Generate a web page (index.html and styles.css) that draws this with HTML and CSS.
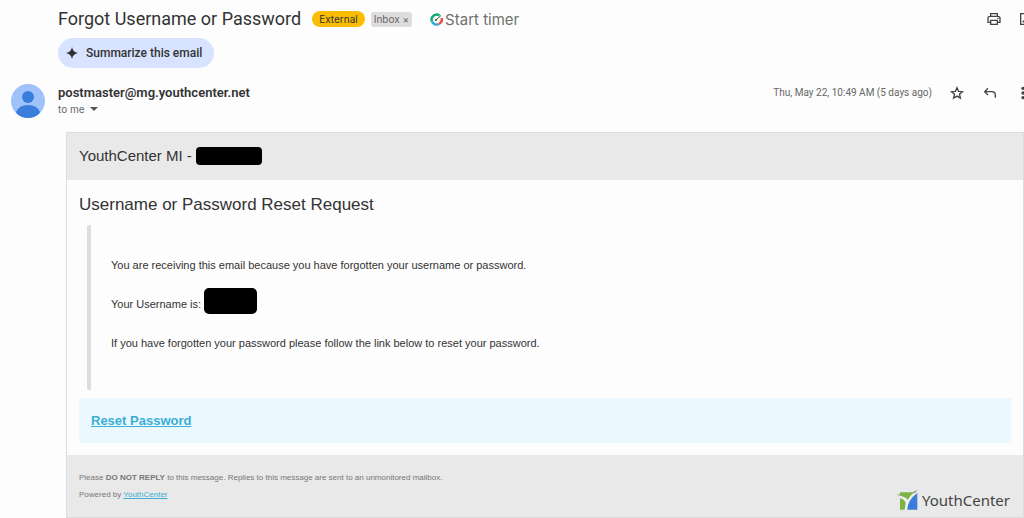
FILE: index.html
```html
<!DOCTYPE html>
<html lang="en">
    <head>
        <meta charset="utf-8">
        <title>Forgot Username or Password</title>
        <link rel="stylesheet" href="styles.css">
    </head>
    <body>
        <header class="subject">
            <h1>Forgot Username or Password</h1>
            <span class="tag external">External</span>
            <span class="tag inbox">Inbox <button type="button" aria-label="Remove label">×</button></span>
            <button type="button" class="timer">
                <svg width="13" height="13" viewBox="0 0 26 26" fill="none" stroke-width="5">
                    <path d="M4 17A10 10 0 0 1 19 5" stroke="#12ad72"/>
                    <path d="M4 17A10 10 0 0 0 18 22" stroke="#31a8db"/>
                    <path d="M18 22A10 10 0 0 0 23 10" stroke="#ef5148"/>
                    <path d="M12 14L22 5" stroke="#444" stroke-width="2"/>
                    <circle cx="12" cy="14" r="2" fill="#444"/>
                </svg>
                Start timer
            </button>
            <div class="tools">
                <button type="button" aria-label="Print">
                    <svg width="16" height="16" viewBox="0 0 24 24" fill="none" stroke="#444" stroke-width="2">
                        <path d="M7 8V4h10v4M7 17H3v-6q0-3 3-3h12q3 0 3 3v6h-4M7 14h10v6H7z"/>
                        <path d="M17 11h2"/>
                    </svg>
                </button>
                <button type="button" aria-label="Open in new window">
                    <svg width="16" height="16" viewBox="0 0 24 24" fill="none" stroke="#444" stroke-width="2">
                        <path d="M12 4H4v16h16v-8M15 4h5v5M20 4L7 17"/>
                    </svg>
                </button>
            </div>
        </header>

        <button type="button" class="summarize">
            <svg width="12" height="12" viewBox="0 0 24 24" fill="#303030">
                <path d="M12 0Q13.500 10.500 24 12Q13.500 13.500 12 24Q10.500 13.500 0 12Q10.500 10.500 12 0z"/>
                <circle cx="12" cy="12" r="5"/>
            </svg>
            Summarize this email
        </button>

        <section class="sender">
            <svg class="avatar" width="34" height="34" viewBox="0 0 34 34">
                <clipPath id="disc"><circle cx="17" cy="17" r="17"/></clipPath>
                <g clip-path="url(#disc)" fill="#3b7ddd">
                    <rect width="34" height="34" fill="#a0c2fb"/>
                    <circle cx="17" cy="13" r="6"/>
                    <path d="M5 28Q8 21 17 21T29 28L27 34H7z"/>
                </g>
            </svg>
            <div class="from">
                <h2>postmaster@mg.youthcenter.net</h2>
                <button type="button" class="to">to me <span class="caret"></span></button>
            </div>
            <time>Thu, May 22, 10:49 AM (5 days ago)</time>
            <div class="tools">
                <button type="button" aria-label="Star">
                    <svg width="16" height="16" viewBox="0 0 24 24" fill="none" stroke="#444" stroke-width="2">
                        <path d="M12 4l2.300 5.500 5.900.5-4.500 3.900 1.400 5.800-5.100-3.100-5.100 3.100 1.400-5.800-4.500-3.900 5.900-.5z"/>
                    </svg>
                </button>
                <button type="button" aria-label="Reply">
                    <svg width="16" height="16" viewBox="0 0 24 24" fill="none" stroke="#444" stroke-width="2">
                        <path d="M9 5L4 10l5 5M4 10h11q5 0 5 5v4"/>
                    </svg>
                </button>
                <button type="button" aria-label="More">
                    <svg width="16" height="16" viewBox="0 0 24 24" fill="#444">
                        <circle cx="12" cy="5" r="2.500"/><circle cx="12" cy="12" r="2.500"/><circle cx="12" cy="19" r="2.500"/>
                    </svg>
                </button>
            </div>
        </section>

        <main class="message">
            <div class="message-header">YouthCenter MI - <span class="redacted"></span></div>
            <div class="message-body">
                <h3>Username or Password Reset Request</h3>
                <blockquote>
                    <p>You are receiving this email because you have forgotten your username or password.</p>
                    <p class="username">Your Username is: <span class="redacted tall"></span></p>
                    <p>If you have forgotten your password please follow the link below to reset your password.</p>
                </blockquote>
                <div class="callout"><a href="#">Reset Password</a></div>
            </div>
            <footer>
                <div>
                    <p>Please <b>DO NOT REPLY</b> to this message. Replies to this message are sent to an unmonitored mailbox.</p>
                    <p>Powered by <a href="#">YouthCenter</a></p>
                </div>
                <div class="logo">
                    <svg width="22" height="22" viewBox="0 0 66 66">
                        <path d="M12 10H56L36 33Q28 21 3 17L12 16z" fill="#7cb342"/>
                        <path d="M12 28Q24 31 30 40L26 62H12z" fill="#7cb342"/>
                        <path d="M64 12V62H34Q34 34 64 12z" fill="#3b7ddd"/>
                        <path d="M1 17Q26 20 34 36Q44 15 65 3Q36 27 31 62H26Q31 48 29 39Q22 24 1 17z" fill="#f4f4f4"/>
                        <path d="M1 17Q20 17 30 27Q18 20 1 17zM50 10L65 3L56 12z" fill="#7c8c6c"/>
                    </svg>
                    YouthCenter
                </div>
            </footer>
        </main>
    </body>
</html>
```
FILE: styles.css
```css
* {
    box-sizing: border-box;
}

body {
    margin: 0;
    padding-top: 7px;
    background-color: #fdfdfd;
    color: #333;
    font-family: Inter, "Liberation Sans", sans-serif;
    overflow: hidden;
}

h1, h2, h3, p, blockquote {
    margin: 0;
    font-weight: normal;
}

button {
    padding: 0;
    border: 0;
    background: none;
    color: inherit;
    font: inherit;
    cursor: pointer;
}

svg {
    display: block;
    flex-shrink: 0;
}

/* subject line */
.subject {
    display: flex;
    align-items: center;
    height: 24px;
    padding-left: 58px;
    white-space: nowrap;
}

h1 {
    font-family: Roboto, sans-serif;
    font-size: 18px;
    line-height: 24px;
}

.tag {
    font-size: 10px;
    line-height: 16px;
}

.external {
    margin-left: 11px;
    padding: 0 7px;
    border-radius: 8px;
    background-color: #fbbc04;
}

.inbox {
    margin-left: 6px;
    padding: 0 3px;
    border-radius: 3px;
    background-color: #ddd;
    color: #666;
    line-height: 15px;
}

.timer {
    display: flex;
    align-items: center;
    gap: 2px;
    margin-left: 18px;
    color: #707070;
    font-size: 15px;
}

.tools {
    display: flex;
    gap: 17px;
    margin-right: -7px;
}

.subject .tools {
    gap: 16px;
    margin-right: -10px;
    margin-left: auto;
}

/* summary button */
.summarize {
    display: flex;
    align-items: center;
    gap: 8px;
    height: 30px;
    margin: 7px 0 0 58px;
    padding: 0 12px 0 8px;
    border-radius: 15px;
    background-color: #d7e3ff;
    font-family: Roboto, sans-serif;
    font-size: 12px;
    font-weight: 500;
}

/* sender */
.sender {
    display: flex;
    height: 64px;
    padding: 16px 0 0 11px;
}

.from {
    flex: 1;
    margin-left: 13px;
}

h2 {
    font-family: Roboto, sans-serif;
    font-size: 13px;
    font-weight: 600;
    line-height: 17px;
}

.to {
    display: flex;
    align-items: center;
    gap: 5px;
    color: #666;
    font-size: 10px;
    line-height: 16px;
}

.caret {
    border: 4px solid transparent;
    border-top-color: #555;
    border-bottom: 0;
}

time {
    color: #666;
    font-family: Roboto, sans-serif;
    font-size: 10px;
    line-height: 17px;
}

.sender .tools {
    height: 17px;
    margin-left: 17px;
}

/* message card */
.message {
    margin-left: 66px;
    border: 1px solid #ddd;
    font-family: "Liberation Sans", Arial, sans-serif;
}

.message-header {
    display: flex;
    align-items: center;
    gap: 4px;
    height: 47px;
    padding: 0 12px 2px;
    background-color: #e9e9e9;
    font-size: 15px;
}

.redacted {
    width: 66px;
    height: 18px;
    border-radius: 4px;
    background-color: #000;
}

.redacted.tall {
    width: 53px;
    height: 26px;
    border-radius: 5px;
}

.message-body {
    padding: 12px;
}

h3 {
    font-size: 17px;
    line-height: 25px;
}

blockquote {
    display: flex;
    flex-direction: column;
    gap: 23px;
    margin: 8px;
    padding: 32px 20px 39px;
    border-left: 4px solid #ddd;
    border-radius: 2px;
    font-size: 11px;
    line-height: 16px;
}

.username {
    display: flex;
    align-items: flex-end;
    gap: 3px;
    margin: -8px 0 -2px;
    line-height: 20px;
}

.callout {
    padding: 12px;
    background-color: #ecf8ff;
    font-size: 13px;
    font-weight: bold;
    line-height: 21px;
}

a {
    color: #3aaed4;
}

footer {
    display: flex;
    justify-content: space-between;
    min-height: 62px;
    padding: 14px 13px 6px 12px;
    background-color: #e9e9e9;
    color: #777;
    font-size: 8px;
    line-height: 17px;
}

.logo {
    display: flex;
    align-items: center;
    align-self: flex-end;
    gap: 4px;
    color: #444;
    font-family: "Noto Sans", sans-serif;
    font-size: 15px;
    line-height: 22px;
}
```
